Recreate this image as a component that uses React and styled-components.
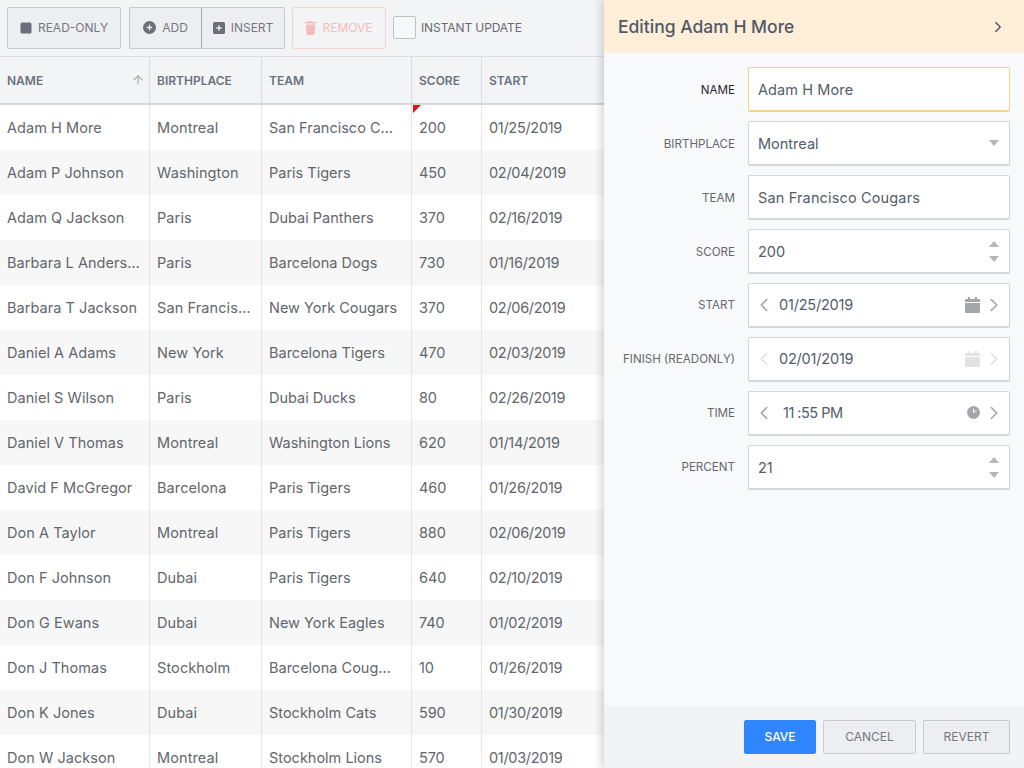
import styled, { createGlobalStyle, css } from 'styled-components';
import { ArrowUp, ChevronLeft, ChevronRight } from 'lucide-react';

const GlobalStyle = createGlobalStyle`
  html, body {
    margin: 0;
    height: 100%;
    overflow: hidden;
    font-family: Inter, "Noto Sans", sans-serif;
  }
  * { box-sizing: border-box; }
`;

const Page = styled.div`
  display: flex;
  width: 1024px;
  height: 768px;
  overflow: hidden;
  background: #f3f4f6;
`;

const Main = styled.div`
  width: 604px;
  flex: none;
  display: flex;
  flex-direction: column;
  overflow: hidden;
`;

const Toolbar = styled.div`
  height: 57px;
  flex: none;
  display: flex;
  align-items: center;
  padding: 0 7px 1px;
  background: #f3f4f6;
  border-bottom: 1px solid #dcdee2;
`;

const Button = styled.button`
  height: 42px;
  width: ${p => p.$width}px;
  margin-right: ${p => p.$gap || 0}px;
  display: flex;
  align-items: center;
  justify-content: center;
  gap: 6px;
  padding: 0;
  font: 400 12px Inter, sans-serif;
  color: #75777f;
  background: #edeef1;
  border: 1px solid #c8cacf;
  border-radius: 2px;
  svg { fill: #6d6e7a; flex: none; }
`;

const GroupButton = styled(Button)`
  ${p => p.$first && css`border-radius: 2px 0 0 2px; border-right: 0;`}
  ${p => !p.$first && css`border-radius: 0 2px 2px 0; border-left: 1px solid #a9abb0;`}
`;

const DangerButton = styled(Button)`
  color: #f3bdb9;
  background: transparent;
  border-color: #f7d3d0;
  svg { fill: #f3bdb9; }
`;

const Check = styled.span`
  width: 23px;
  height: 23px;
  flex: none;
  background: #f7f8fa;
  border: 1px solid #bfc1c6;
  border-radius: 2px;
`;

const CheckLabel = styled.span`
  margin-left: 5px;
  font-size: 12px;
  letter-spacing: -0.1px;
  color: #676a72;
`;

const Row = styled.div`
  display: grid;
  grid-template-columns: 150px 112px 150px 70px 123px;
`;

const HeadRow = styled(Row)`
  height: 48px;
  flex: none;
  background: #f3f4f6;
  border-bottom: 2px solid #d5d7db;
`;

const HeadCell = styled.div`
  display: flex;
  align-items: center;
  justify-content: space-between;
  padding: 0 4px 0 7px;
  font-size: 12px;
  font-weight: 600;
  color: #6a7280;
  border-right: 1px solid #d8dade;
  &:last-child { border-right: 0; }
  svg { color: #a9acb2; }
`;

const BodyRow = styled(Row)`
  height: 45px;
  flex: none;
  background: ${p => (p.$odd ? '#f7f7f8' : '#fff')};
`;

const Cell = styled.div`
  position: relative;
  display: flex;
  align-items: center;
  padding: 0 ${p => p.$padRight}px 1px 7px;
  min-width: 0;
  font-size: 14.5px;
  letter-spacing: ${p => p.$spacing}px;
  color: #63666b;
  border-right: 1px solid #e4e5e8;
  &:last-child { border-right: 0; }
`;

const CellText = styled.span`
  white-space: nowrap;
  overflow: hidden;
  text-overflow: ellipsis;
`;

const DirtyMark = styled.i`
  position: absolute;
  top: 0;
  left: 1px;
  border-top: 8px solid #ee0a1e;
  border-right: 8px solid transparent;
`;

const Panel = styled.aside`
  position: relative;
  width: 420px;
  flex: none;
  display: flex;
  flex-direction: column;
  background: #f8f9fb;
  box-shadow: -3px 0 8px rgba(0, 0, 0, 0.16);
`;

const PanelHead = styled.div`
  height: 53px;
  flex: none;
  display: flex;
  align-items: center;
  justify-content: space-between;
  padding: 0 17px 0 14px;
  background: #ffefd9;
  font-size: 17.5px;
  font-weight: 500;
  color: #4f5a67;
  svg { color: #525c68; }
`;

const Form = styled.div`
  flex: 1;
  display: flex;
  flex-direction: column;
  gap: 9px;
  padding: 14px 14px 0 0;
`;

const Field = styled.div`
  display: grid;
  grid-template-columns: 131px 1fr;
  column-gap: 13px;
  align-items: center;
`;

const Label = styled.label`
  padding-bottom: ${p => (p.$lift ? 1 : 0)}px;
  text-align: right;
  font-size: 11.6px;
  white-space: nowrap;
  color: ${p => (p.$active ? '#26282c' : '#65686f')};
`;

const Control = styled.div`
  height: 45px;
  display: flex;
  align-items: center;
  padding: 0 10px 0 9px;
  background: #fff;
  border: 1px solid ${p => (p.$focused ? '#fbd08b' : '#d3d5d9')};
  border-bottom-width: 2px;
  border-radius: 2px;
  font-size: 14.5px;
  color: #535c69;
`;

const PickerControl = styled(Control)`
  padding: 0 4px 2px 4px;
`;

const Value = styled.span`
  flex: 1;
  margin-left: ${p => p.$indent || 0}px;
  letter-spacing: ${p => p.$spacing || 0}px;
`;

const Caret = styled.i`
  display: block;
  border-left: 5.5px solid transparent;
  border-right: 5.5px solid transparent;
  ${p => (p.$up
    ? css`border-bottom: 6px solid #b4b5b8;`
    : css`border-top: 6px solid #b4b5b8;`)}
`;

const Stepper = styled.div`
  display: flex;
  flex-direction: column;
  gap: 9px;
`;

const NavIcon = styled.span`
  display: flex;
  margin-top: 1px;
  color: ${p => (p.$disabled ? '#e0e1e3' : '#a5a6a9')};
`;

const PickIcon = styled.span`
  display: flex;
  margin: 1px 3px 0 0;
  fill: ${p => (p.$disabled ? '#e2e2e4' : '#a5a6a9')};
  svg .cut { stroke: #fff; fill: none; }
`;

const Footer = styled.div`
  height: 62px;
  flex: none;
  display: flex;
  align-items: center;
  justify-content: flex-end;
  gap: 7px;
  padding: 0 14px 1px 0;
  background: #f2f3f5;
`;

const FootButton = styled(Button)`
  height: 34px;
`;

const SaveButton = styled(FootButton)`
  font-weight: 500;
  color: #fff;
  background: #2f86ff;
  border-color: #2f86ff;
`;

const StopIcon = () => (
  <svg width="12" height="12" viewBox="0 0 12 12"><rect x="0.5" y="0.5" width="11" height="11" rx="1.5" /></svg>
);

const PlusCircleIcon = () => (
  <svg width="13" height="13" viewBox="0 0 13 13">
    <path fillRule="evenodd" d="M6.5 0a6.5 6.5 0 1 0 0 13a6.5 6.5 0 1 0 0-13ZM5.8 3.8h1.4v2h2v1.4h-2v2H5.8v-2h-2V5.8h2Z" />
  </svg>
);

const PlusSquareIcon = () => (
  <svg width="12" height="12" viewBox="0 0 12 12">
    <path fillRule="evenodd" d="M1.5 0h9A1.5 1.5 0 0 1 12 1.5v9a1.5 1.5 0 0 1-1.5 1.5h-9A1.5 1.5 0 0 1 0 10.500v-9A1.500 1.500 0 0 1 1.500 0ZM5.300 3.300v2h-2v1.400h2v2h1.400v-2h2V5.300h-2v-2Z" />
  </svg>
);

const TrashIcon = () => (
  <svg width="11" height="14" viewBox="0 0 11 14">
    <path d="M3.500 0h4l.5 1h3v1.500H0V1h3ZM.8 3.500h9.400l-.7 9.500a1 1 0 0 1-1 1h-6a1 1 0 0 1-1-1Z" />
  </svg>
);

const CalendarIcon = () => (
  <svg width="15" height="16" viewBox="0 0 15 16">
    <path d="M3 0h2v2h5V0h2v2h2a1 1 0 0 1 1 1v2H0V3a1 1 0 0 1 1-1h2ZM0 6h15v9a1 1 0 0 1-1 1H1a1 1 0 0 1-1-1Z" />
  </svg>
);

const ClockIcon = () => (
  <svg width="13" height="13" viewBox="0 0 13 13">
    <circle cx="6.500" cy="6.500" r="6.500" />
    <path className="cut" d="M6.500 6.500V2.500M6.500 6.500L9.500 4.500" strokeWidth="1" />
  </svg>
);

const columns = ['NAME', 'BIRTHPLACE', 'TEAM', 'SCORE', 'START'];
const columnPads = [9, 8, 12, 7, 7];
const columnSpacing = [0.05, 0.1, 0, -0.1, -0.3];

const people = [
  ['Adam H More', 'Montreal', 'San Francisco Cougars', '200', '01/25/2019'],
  ['Adam P Johnson', 'Washington', 'Paris Tigers', '450', '02/04/2019'],
  ['Adam Q Jackson', 'Paris', 'Dubai Panthers', '370', '02/16/2019'],
  ['Barbara L Anderson', 'Paris', 'Barcelona Dogs', '730', '01/16/2019'],
  ['Barbara T Jackson', 'San Francisco', 'New York Cougars', '370', '02/06/2019'],
  ['Daniel A Adams', 'New York', 'Barcelona Tigers', '470', '02/03/2019'],
  ['Daniel S Wilson', 'Paris', 'Dubai Ducks', '80', '02/26/2019'],
  ['Daniel V Thomas', 'Montreal', 'Washington Lions', '620', '01/14/2019'],
  ['David F McGregor', 'Barcelona', 'Paris Tigers', '460', '01/26/2019'],
  ['Don A Taylor', 'Montreal', 'Paris Tigers', '880', '02/06/2019'],
  ['Don F Johnson', 'Dubai', 'Paris Tigers', '640', '02/10/2019'],
  ['Don G Ewans', 'Dubai', 'New York Eagles', '740', '01/02/2019'],
  ['Don J Thomas', 'Stockholm', 'Barcelona Cougars', '10', '01/26/2019'],
  ['Don K Jones', 'Dubai', 'Stockholm Cats', '590', '01/30/2019'],
  ['Don W Jackson', 'Montreal', 'Stockholm Lions', '570', '01/03/2019'],
];

const Spin = () => (
  <Stepper>
    <Caret $up />
    <Caret />
  </Stepper>
);

const Picker = ({ value, indent, spacing, icon, disabled }) => (
  <PickerControl>
    <NavIcon $disabled={disabled}><ChevronLeft size={22} strokeWidth={1.75} /></NavIcon>
    <Value $indent={indent} $spacing={spacing}>{value}</Value>
    <PickIcon $disabled={disabled}>{icon}</PickIcon>
    <NavIcon $disabled={disabled}><ChevronRight size={22} strokeWidth={1.75} /></NavIcon>
  </PickerControl>
);

const App = () => (
  <Page>
    <GlobalStyle />
    <Main>
      <Toolbar>
        <Button $width={114} $gap={8}><StopIcon />READ-ONLY</Button>
        <GroupButton $first $width={72}><PlusCircleIcon />ADD</GroupButton>
        <GroupButton $width={84} $gap={7}><PlusSquareIcon />INSERT</GroupButton>
        <DangerButton $width={94} $gap={7}><TrashIcon />REMOVE</DangerButton>
        <Check />
        <CheckLabel>INSTANT UPDATE</CheckLabel>
      </Toolbar>
      <HeadRow>
        {columns.map((name, i) => (
          <HeadCell key={name}>
            {name}
            {i === 0 && <ArrowUp size={14} />}
          </HeadCell>
        ))}
      </HeadRow>
      {people.map((person, r) => (
        <BodyRow key={person[0]} $odd={r % 2 === 1}>
          {person.map((text, c) => (
            <Cell key={c} $padRight={columnPads[c]} $spacing={columnSpacing[c]}>
              {r === 0 && c === 3 && <DirtyMark />}
              <CellText>{text}</CellText>
            </Cell>
          ))}
        </BodyRow>
      ))}
    </Main>
    <Panel>
      <PanelHead>
        Editing Adam H More
        <ChevronRight size={18} />
      </PanelHead>
      <Form>
        <Field>
          <Label $active>NAME</Label>
          <Control $focused><Value $spacing={0.1}>Adam H More</Value></Control>
        </Field>
        <Field>
          <Label>BIRTHPLACE</Label>
          <Control><Value>Montreal</Value><Caret /></Control>
        </Field>
        <Field>
          <Label>TEAM</Label>
          <Control><Value $spacing={0.15}>San Francisco Cougars</Value></Control>
        </Field>
        <Field>
          <Label>SCORE</Label>
          <Control><Value>200</Value><Spin /></Control>
        </Field>
        <Field>
          <Label $lift>START</Label>
          <Picker value="01/25/2019" icon={<CalendarIcon />} indent={4} spacing={-0.2} />
        </Field>
        <Field>
          <Label $lift>FINISH (READONLY)</Label>
          <Picker value="02/01/2019" icon={<CalendarIcon />} indent={4} spacing={-0.2} disabled />
        </Field>
        <Field>
          <Label $lift>TIME</Label>
          <Picker value="11 :55 PM" icon={<ClockIcon />} indent={8} spacing={-0.5} />
        </Field>
        <Field>
          <Label $lift>PERCENT</Label>
          <Control><Value>21</Value><Spin /></Control>
        </Field>
      </Form>
      <Footer>
        <SaveButton $width={72}>SAVE</SaveButton>
        <FootButton $width={93}>CANCEL</FootButton>
        <FootButton $width={87}>REVERT</FootButton>
      </Footer>
    </Panel>
  </Page>
);

export default App;
